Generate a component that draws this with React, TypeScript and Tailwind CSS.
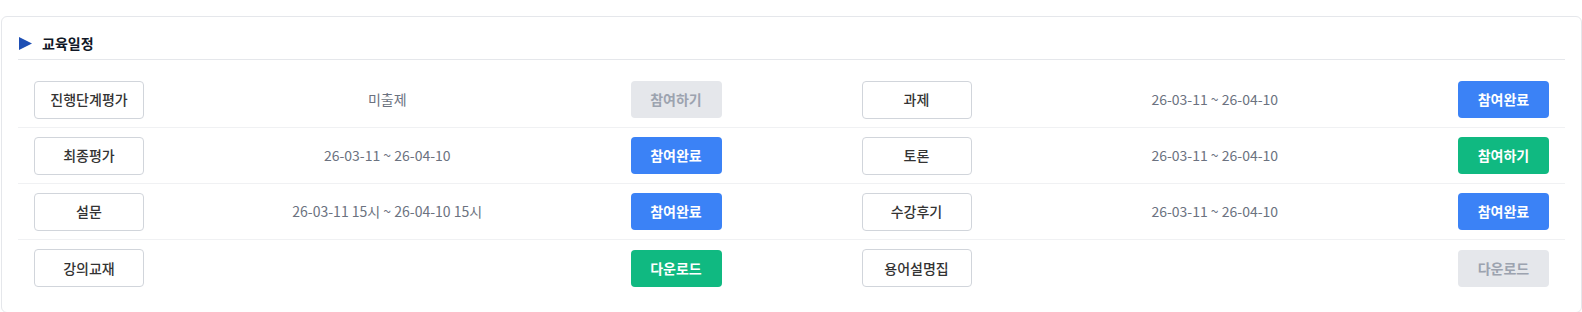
type Action = { label: string; kind: 'blue' | 'green' | 'gray' };

interface Item {
  name: string;
  period: string;
  action: Action;
}

const rows: [Item, Item][] = [
  [
    { name: '진행단계평가', period: '미출제', action: { label: '참여하기', kind: 'gray' } },
    { name: '과제', period: '26-03-11 ~ 26-04-10', action: { label: '참여완료', kind: 'blue' } },
  ],
  [
    { name: '최종평가', period: '26-03-11 ~ 26-04-10', action: { label: '참여완료', kind: 'blue' } },
    { name: '토론', period: '26-03-11 ~ 26-04-10', action: { label: '참여하기', kind: 'green' } },
  ],
  [
    { name: '설문', period: '26-03-11 15시 ~ 26-04-10 15시', action: { label: '참여완료', kind: 'blue' } },
    { name: '수강후기', period: '26-03-11 ~ 26-04-10', action: { label: '참여완료', kind: 'blue' } },
  ],
  [
    { name: '강의교재', period: '', action: { label: '다운로드', kind: 'green' } },
    { name: '용어설명집', period: '', action: { label: '다운로드', kind: 'gray' } },
  ],
];

const actionClass = {
  blue: 'bg-[#3b82f6] text-white',
  green: 'bg-[#10b981] text-white',
  gray: 'bg-[#e5e7eb] text-[#9ca3af] cursor-not-allowed',
};

const ScheduleCell = ({ item }: { item: Item }) => (
  <div className="flex items-center">
    <button className="w-[110px] h-[38px] shrink-0 rounded-[4px] border border-[#d1d5db] bg-white text-[14px] font-medium text-[#333333]">
      {item.name}
    </button>
    <div className="flex-1 text-center text-[14px] text-[#6b7280]">{item.period}</div>
    <button
      className={`w-[91px] h-[37px] shrink-0 rounded-[4px] text-[14px] font-bold ${actionClass[item.action.kind]}`}
    >
      {item.action.label}
    </button>
  </div>
);

export default function App() {
  return (
    <div className="pt-4 bg-white" style={{ fontFamily: '"Noto Sans CJK KR", "Noto Sans", sans-serif' }}>
      <div className="ml-px rounded-md border border-[#e5e7eb] bg-white p-4">
        <div className="flex items-center gap-[10px] border-b border-[#e5e7eb] pb-[6px] pl-px">
          <svg width="13" height="13" viewBox="0 0 13 13">
            <path d="M0 0 L13 6.5 L0 13 Z" fill="#1e4fb4" />
          </svg>
          <h2 className="text-[14px] font-bold leading-[20px] text-[#111827]">교육일정</h2>
        </div>
        <div className="mt-3">
          {rows.map((pair, i) => (
            <div
              key={i}
              className={`grid h-[56px] grid-cols-2 items-center gap-x-[140px] px-4 ${
                i < rows.length - 1 ? 'border-b border-[#f0f1f3]' : ''
              }`}
            >
              <ScheduleCell item={pair[0]} />
              <ScheduleCell item={pair[1]} />
            </div>
          ))}
        </div>
      </div>
    </div>
  );
}
